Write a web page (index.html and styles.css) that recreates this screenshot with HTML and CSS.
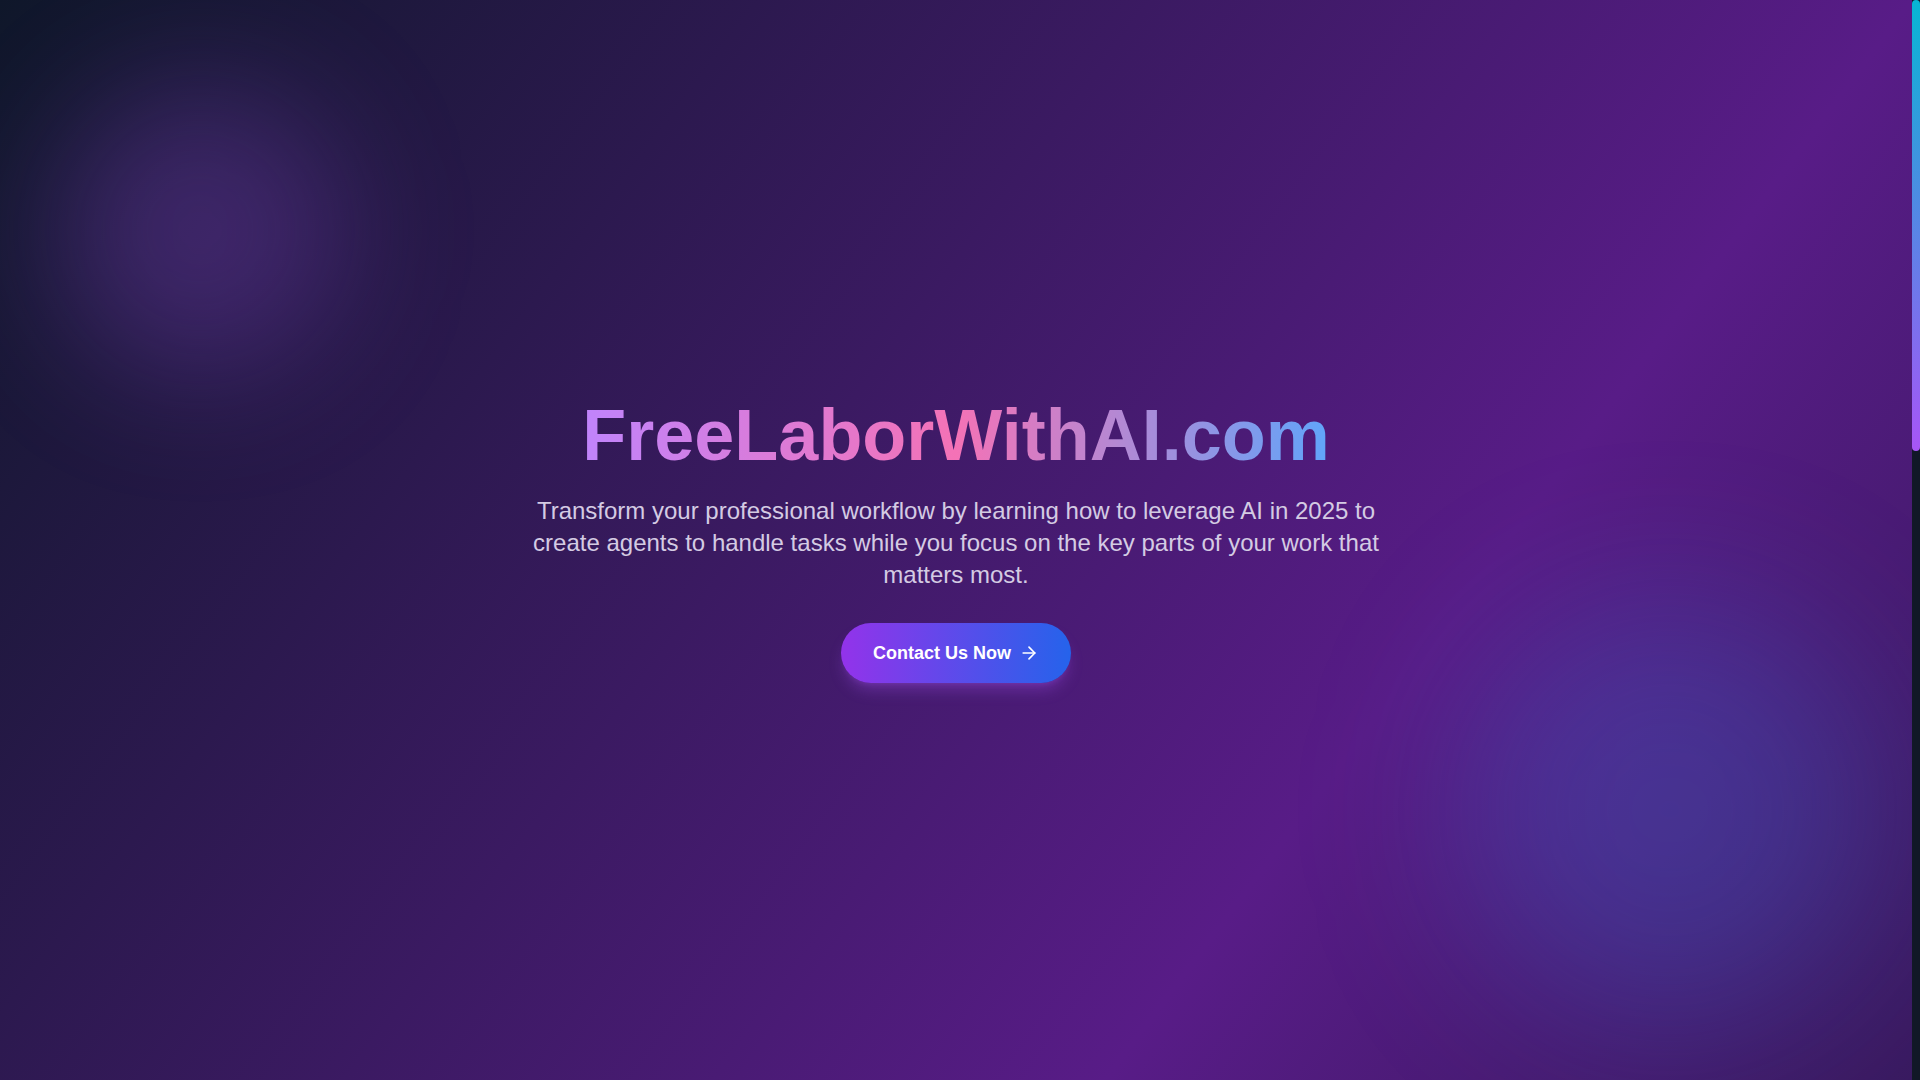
FILE: index.html
```html
<!DOCTYPE html>
<html lang="en">
<head>
<meta charset="utf-8">
<title>FreeLaborWithAI.com</title>
<link rel="stylesheet" href="styles.css">
</head>
<body>
<div class="shell">
  <main class="page">
    <section class="hero">
      <div class="blob blob-purple"></div>
      <div class="blob blob-blue"></div>
      <div class="hero-content">
        <h1 class="title">FreeLaborWithAI.com</h1>
        <p class="subtitle">Transform your professional workflow by learning how to leverage AI in 2025 to create agents to handle tasks while you focus on the key parts of your work that matters most.</p>
        <a class="cta" href="#contact">
          <span>Contact Us Now</span>
          <svg class="cta-icon" width="20" height="20" viewBox="0 0 24 24" fill="none" stroke="currentColor" stroke-width="2" stroke-linecap="round" stroke-linejoin="round" aria-hidden="true"><path d="M5 12h14"/><path d="m12 5 7 7-7 7"/></svg>
        </a>
      </div>
    </section>
  </main>
  <div class="scrollbar" aria-hidden="true">
    <div class="scrollbar-thumb"></div>
  </div>
</div>
</body>
</html>
```

FILE: styles.css
```css
html, body {
  margin: 0;
  padding: 0;
}

body {
  font-family: "Liberation Sans", Arial, sans-serif;
  background: #0f172a;
  overflow: hidden;
}

.shell {
  display: flex;
  height: 100vh;
}

.page {
  flex: 1;
  min-width: 0;
  height: 100vh;
  background-image: linear-gradient(to bottom right, #0f172a, #581c87, #0f172a);
  background-size: 100% 2560px;
  background-repeat: no-repeat;
  background-color: #0f172a;
}

.scrollbar {
  width: 8px;
  flex: none;
  background: #111827;
}

.scrollbar-thumb {
  height: 451px;
  border-radius: 4px;
  background: linear-gradient(to bottom, #06b6d4, #a855f7);
}

.hero {
  position: relative;
  overflow: hidden;
  height: 100vh;
  display: flex;
  align-items: center;
  justify-content: center;
  padding: 0 16px;
  box-sizing: border-box;
}

.blob {
  position: absolute;
  border-radius: 50%;
  pointer-events: none;
}

.blob-purple {
  width: 288px;
  height: 288px;
  left: 56px;
  top: 86px;
  filter: blur(64px);
  background: rgba(168, 85, 247, 0.24);
}

.blob-blue {
  width: 420px;
  height: 420px;
  right: 32px;
  bottom: 60px;
  filter: blur(80px);
  background: rgba(59, 130, 246, 0.22);
}

.hero-content {
  position: relative;
  display: flex;
  flex-direction: column;
  align-items: center;
  text-align: center;
  max-width: 896px;
  padding-top: 1px;
}

.title {
  margin: 0 0 24px;
  font-size: 72px;
  line-height: 72px;
  font-weight: 700;
  background: linear-gradient(to right, #c084fc, #f472b6, #60a5fa);
  -webkit-background-clip: text;
  background-clip: text;
  color: transparent;
}

.subtitle {
  margin: 0 0 32px;
  font-size: 24px;
  line-height: 32px;
  color: #d4cbe3;
}

.cta {
  display: inline-flex;
  align-items: center;
  gap: 8px;
  padding: 16px 32px;
  border-radius: 9999px;
  background: linear-gradient(to right, #9333ea, #2563eb);
  color: #ffffff;
  font-size: 18px;
  line-height: 28px;
  font-weight: 700;
  text-decoration: none;
  box-shadow: 0 10px 15px -3px rgba(168, 85, 247, 0.3), 0 4px 6px -4px rgba(168, 85, 247, 0.3);
}

.cta-icon {
  display: block;
  width: 20px;
  height: 20px;
}
```
